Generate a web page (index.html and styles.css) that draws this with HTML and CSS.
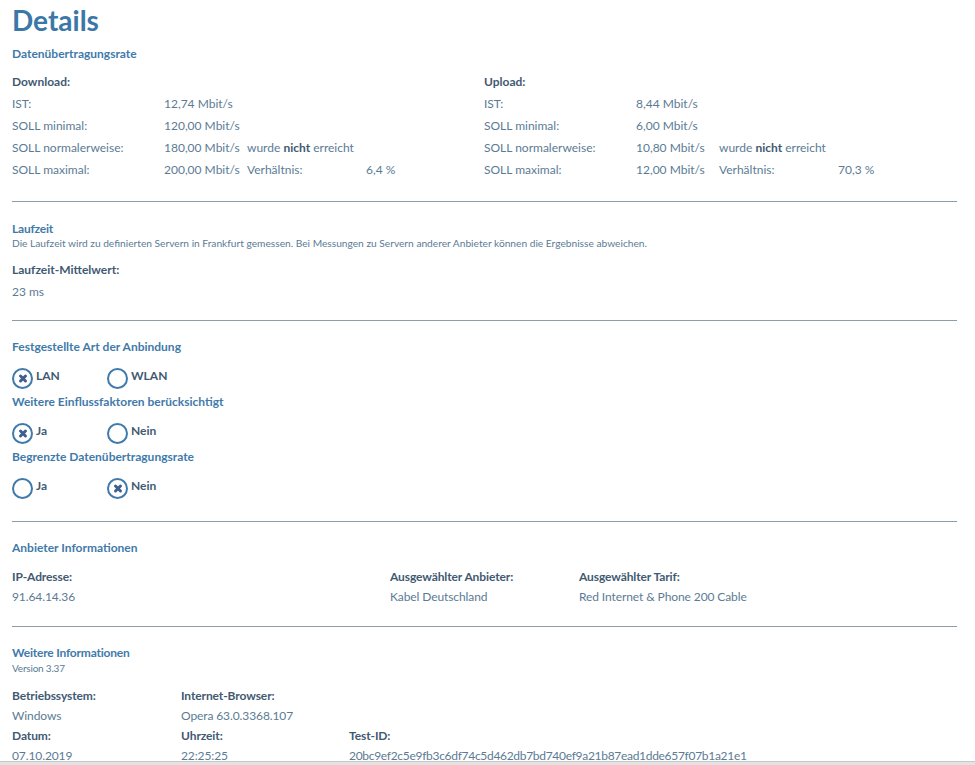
FILE: index.html
```html
<!DOCTYPE html>
<html lang="de">
<head>
  <meta charset="UTF-8" />
  <meta name="viewport" content="width=device-width, initial-scale=1.0"/>
  <title>Details</title>
  <link rel="stylesheet" href="styles.css">
</head>
<body>

  <div class="page">
    <h1 class="title">Details</h1>

    <div class="section rate">
      <div class="heading">Datenübertragungsrate</div>
      <div class="halves">
        <div class="half">
          <div class="label group">Download:</div>
          <div class="rate-row"><span>IST:</span><span>12,74 Mbit/s</span></div>
          <div class="rate-row"><span>SOLL minimal:</span><span>120,00 Mbit/s</span></div>
          <div class="rate-row"><span>SOLL normalerweise:</span><span>180,00 Mbit/s</span><span>wurde <b>nicht</b> erreicht</span></div>
          <div class="rate-row"><span>SOLL maximal:</span><span>200,00 Mbit/s</span><span>Verhältnis:</span><span>6,4 %</span></div>
        </div>
        <div class="half">
          <div class="label group">Upload:</div>
          <div class="rate-row"><span>IST:</span><span>8,44 Mbit/s</span></div>
          <div class="rate-row"><span>SOLL minimal:</span><span>6,00 Mbit/s</span></div>
          <div class="rate-row"><span>SOLL normalerweise:</span><span>10,80 Mbit/s</span><span>wurde <b>nicht</b> erreicht</span></div>
          <div class="rate-row"><span>SOLL maximal:</span><span>12,00 Mbit/s</span><span>Verhältnis:</span><span>70,3 %</span></div>
        </div>
      </div>
    </div>

    <hr>

    <div class="section latency">
      <div class="heading small">Laufzeit</div>
      <div class="note">Die Laufzeit wird zu definierten Servern in Frankfurt gemessen. Bei Messungen zu Servern anderer Anbieter können die Ergebnisse abweichen.</div>
      <div class="label avg">Laufzeit-Mittelwert:</div>
      <div class="value">23 ms</div>
    </div>

    <hr class="hr-2">

    <div class="section connection">
      <div class="heading">Festgestellte Art der Anbindung</div>
      <div class="radios">
        <div class="radio checked"><span class="circle"></span>LAN</div>
        <div class="radio"><span class="circle"></span>WLAN</div>
      </div>
      <div class="heading">Weitere Einflussfaktoren berücksichtigt</div>
      <div class="radios">
        <div class="radio checked"><span class="circle"></span>Ja</div>
        <div class="radio"><span class="circle"></span>Nein</div>
      </div>
      <div class="heading">Begrenzte Datenübertragungsrate</div>
      <div class="radios">
        <div class="radio"><span class="circle"></span>Ja</div>
        <div class="radio checked"><span class="circle"></span>Nein</div>
      </div>
    </div>

    <hr class="hr-3">

    <div class="section provider">
      <div class="heading">Anbieter Informationen</div>
      <div class="info-grid provider-grid">
        <div class="label">IP-Adresse:</div>
        <div class="label">Ausgewählter Anbieter:</div>
        <div class="label">Ausgewählter Tarif:</div>
        <div class="value">91.64.14.36</div>
        <div class="value">Kabel Deutschland</div>
        <div class="value">Red Internet &amp; Phone 200 Cable</div>
      </div>
    </div>

    <hr class="hr-4">

    <div class="section more">
      <div class="heading small">Weitere Informationen</div>
      <div class="version">Version 3.37</div>
      <div class="info-grid more-grid">
        <div class="label">Betriebssystem:</div>
        <div class="label">Internet-Browser:</div>
        <div></div>
        <div class="value">Windows</div>
        <div class="value">Opera 63.0.3368.107</div>
        <div></div>
        <div class="label">Datum:</div>
        <div class="label">Uhrzeit:</div>
        <div class="label">Test-ID:</div>
        <div class="value">07.10.2019</div>
        <div class="value">22:25:25</div>
        <div class="value test-id">20bc9ef2c5e9fb3c6df74c5d462db7bd740ef9a21b87ead1dde657f07b1a21e1</div>
      </div>
    </div>
  </div>

  <div class="bottom-bar"></div>

</body>
</html>
```

FILE: styles.css
```css
body {
  margin: 0;
  background: #fff;
  font-family: Lato, "Liberation Sans", sans-serif;
  font-size: 12px;
  color: #5b7b95;
}

.page {
  padding: 0 18px 0 12px;
}

.title {
  margin: 0;
  font-size: 28px;
  line-height: 40px;
  font-weight: 700;
  color: #3b78a8;
}

.heading {
  font-weight: 700;
  color: #3f7aaa;
  line-height: 22px;
}

.heading.small {
  line-height: 16px;
  letter-spacing: -0.2px;
}

.label {
  font-weight: 700;
  color: #3f5a72;
}

.rate {
  padding-top: 3px;
}

.halves {
  display: grid;
  grid-template-columns: 472px 1fr;
  margin-top: 6px;
}

.group {
  line-height: 22px;
}

.rate-row {
  display: grid;
  grid-template-columns: 152px 83px 119px auto;
  line-height: 22px;
  white-space: nowrap;
}

.rate-row b {
  color: #3f5a72;
}

hr {
  border: none;
  border-top: 1px solid #8d9ca8;
  margin: 20px 0 0;
}

.latency {
  padding-top: 19px;
}

.note {
  font-size: 10.2px;
  line-height: 12px;
}

.avg {
  margin-top: 10px;
  line-height: 22px;
}

.latency .value {
  line-height: 22px;
}

.hr-2 {
  margin-top: 17px;
}

.connection {
  padding-top: 15px;
}

.radios {
  display: flex;
  margin: 10px 0 0;
  height: 23px;
}

.radio {
  width: 95px;
  display: flex;
  align-items: flex-start;
  font-weight: 700;
  color: #3f5a72;
  line-height: 16px;
}

.circle {
  flex: none;
  width: 17px;
  height: 17px;
  border: 2px solid #3f7aaa;
  border-radius: 50%;
  margin-right: 3px;
  position: relative;
}

.radio.checked .circle::before,
.radio.checked .circle::after {
  content: "";
  position: absolute;
  left: 3.5px;
  top: 7px;
  width: 10px;
  height: 3px;
  background: #3f5f8e;
  border-radius: 1.5px;
  transform: rotate(45deg);
}

.radio.checked .circle::after {
  transform: rotate(-45deg);
}

.hr-3 {
  margin-top: 20px;
}

.provider {
  padding-top: 15px;
}

.info-grid {
  display: grid;
  line-height: 20px;
  letter-spacing: -0.1px;
  white-space: nowrap;
}

.provider-grid {
  grid-template-columns: 378px 189px 1fr;
  margin-top: 8px;
}

.hr-4 {
  margin-top: 19px;
}

.more {
  padding-top: 18px;
}

.version {
  font-size: 10px;
  line-height: 14px;
  letter-spacing: -0.2px;
}

.more-grid {
  grid-template-columns: 169px 168px 1fr;
  margin-top: 11px;
}

.test-id {
  letter-spacing: -0.3px;
}

.bottom-bar {
  position: fixed;
  left: 0;
  right: 0;
  bottom: 0;
  height: 3px;
  background: #e3e3e3;
  border-top: 1px solid #c8c8c8;
}
```
